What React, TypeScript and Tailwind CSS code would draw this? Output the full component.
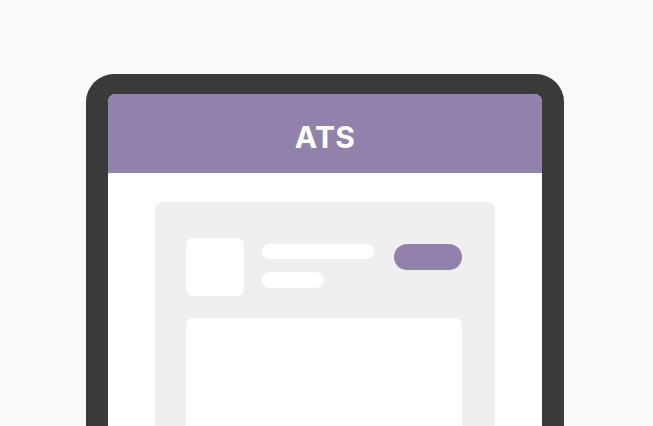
export default function App() {
  return (
    <div className="h-[426px] w-full overflow-hidden bg-[#f9f9fb] flex justify-center pt-[74px] pr-[3px]" style={{ fontFamily: "Inter, 'Liberation Sans', sans-serif" }}>
      {/* Device frame */}
      <div className="w-[478px] h-[420px] shrink-0 rounded-t-[28px] bg-[#3a3a3a] px-[22px] pt-[20px]">
        <div className="h-full rounded-t-[8px] overflow-hidden bg-white flex flex-col">
          {/* Header */}
          <div className="h-[79px] shrink-0 bg-[#9181ab] flex items-center justify-center">
            <span className="text-white text-[30px] font-bold tracking-[0.3px] leading-none mt-[6px]">ATS</span>
          </div>

          {/* Content */}
          <div className="px-[47px] pt-[29px]">
            <div className="rounded-[8px] bg-[#efeff1] pl-[31px] pr-[33px] pt-[36px] h-[300px]">
              <div className="flex items-start">
                <div className="w-[58px] h-[58px] rounded-[7px] bg-white shrink-0" />
                <div className="ml-[18px] pt-[6px] flex flex-col gap-[13px]">
                  <div className="w-[112px] h-[15px] rounded-full bg-white" />
                  <div className="w-[62px] h-[16px] rounded-full bg-white" />
                </div>
                <div className="ml-auto mt-[6px] w-[68px] h-[26px] rounded-full bg-[#9181ab]" />
              </div>
              <div className="mt-[22px] h-[200px] rounded-[7px] bg-white" />
            </div>
          </div>
        </div>
      </div>
    </div>
  );
}
